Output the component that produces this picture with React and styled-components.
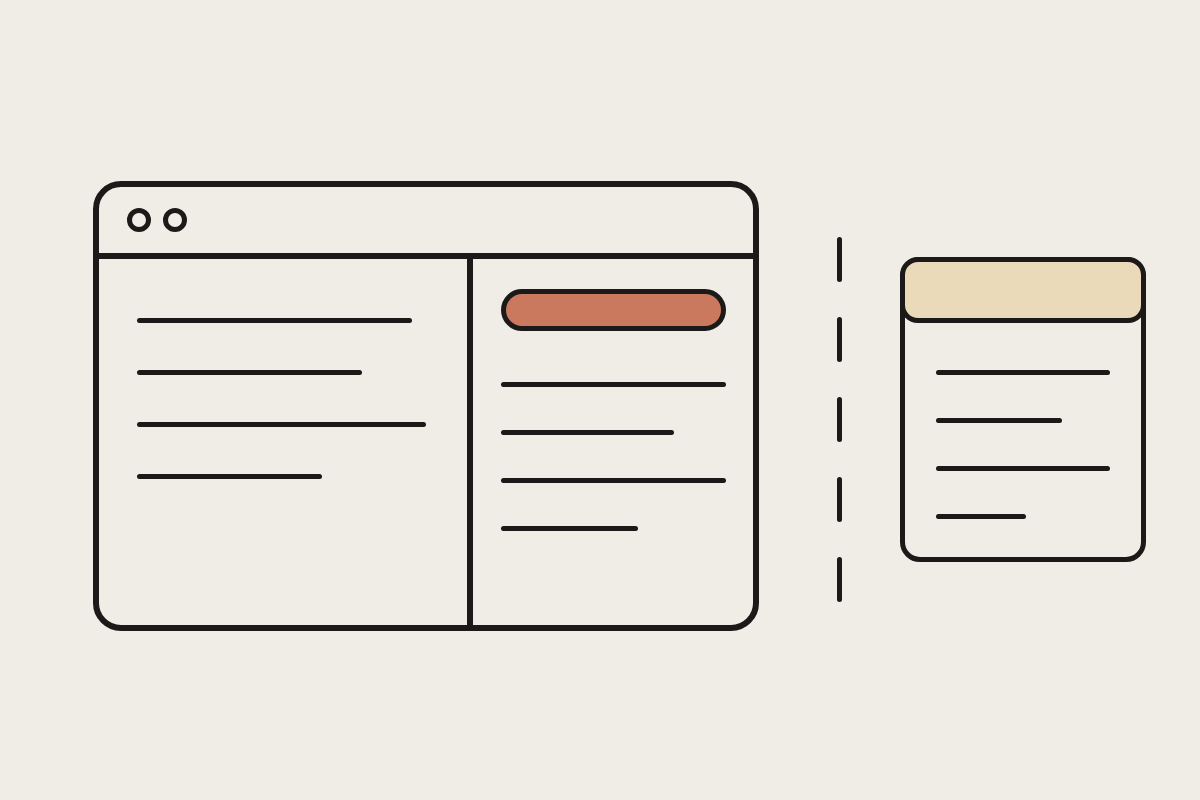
import React from 'react'
import styled, { createGlobalStyle } from 'styled-components'

const ink = '#1b1a18'

const GlobalStyle = createGlobalStyle`
body {
  margin:0;
  background:#f0ede6;
  font-family:"Liberation Sans", Arial, sans-serif;
}
`;

const Page = styled.div`
width:1200px;
height:800px;
display:flex;
align-items:flex-start;
padding-left:93px;
box-sizing:border-box;
background:#f0ede6;
`;

const Window = styled.div`
box-sizing:border-box;
width:666px;
height:450px;
margin-top:181px;
border:6px solid ${ink};
border-radius:28px;
display:flex;
flex-direction:column;
`;

const TitleBar = styled.div`
height:66px;
border-bottom:6px solid ${ink};
display:flex;
align-items:center;
gap:12px;
padding-left:28px;
`;

const Dot = styled.div`
box-sizing:border-box;
width:24px;
height:24px;
border:5px solid ${ink};
border-radius:50%;
`;

const Body = styled.div`
flex:1;
display:flex;
`;

const LeftPane = styled.div`
box-sizing:border-box;
width:374px;
border-right:6px solid ${ink};
padding:59px 0 0 38px;
display:flex;
flex-direction:column;
gap:47px;
`;

const RightPane = styled.div`
flex:1;
padding:30px 0 0 28px;
display:flex;
flex-direction:column;
gap:51px;
`;

const Lines = styled.div`
display:flex;
flex-direction:column;
gap:${p => p.$gap}px;
`;

const Line = styled.div`
width:${p => p.$w}px;
height:5px;
border-radius:3px;
background:${ink};
`;

const Pill = styled.div`
box-sizing:border-box;
width:225px;
height:42px;
border:5px solid ${ink};
border-radius:21px;
background:#cb795e;
`;

const Divider = styled.div`
margin:237px 0 0 78px;
display:flex;
flex-direction:column;
gap:35px;
`;

const Dash = styled.div`
width:5px;
height:45px;
border-radius:3px;
background:${ink};
`;

const SmallWindow = styled.div`
box-sizing:border-box;
width:246px;
height:305px;
margin:257px 0 0 58px;
border:5px solid ${ink};
border-radius:20px;
display:flex;
flex-direction:column;
`;

const SmallHeader = styled.div`
box-sizing:border-box;
height:66px;
margin:-5px -5px 0;
border:5px solid ${ink};
border-radius:18px;
background:#eadab9;
`;

const SmallBody = styled.div`
padding:47px 0 0 31px;
`;

const App = () => {
  return <Page>
    <GlobalStyle />
    <Window>
      <TitleBar>
        <Dot />
        <Dot />
      </TitleBar>
      <Body>
        <LeftPane>
          <Line $w={275} />
          <Line $w={225} />
          <Line $w={289} />
          <Line $w={185} />
        </LeftPane>
        <RightPane>
          <Pill />
          <Lines $gap={43}>
            <Line $w={225} />
            <Line $w={173} />
            <Line $w={225} />
            <Line $w={137} />
          </Lines>
        </RightPane>
      </Body>
    </Window>

    <Divider>
      <Dash />
      <Dash />
      <Dash />
      <Dash />
      <Dash />
    </Divider>

    <SmallWindow>
      <SmallHeader />
      <SmallBody>
        <Lines $gap={43}>
          <Line $w={174} />
          <Line $w={126} />
          <Line $w={174} />
          <Line $w={90} />
        </Lines>
      </SmallBody>
    </SmallWindow>
  </Page>
}

export default App;
